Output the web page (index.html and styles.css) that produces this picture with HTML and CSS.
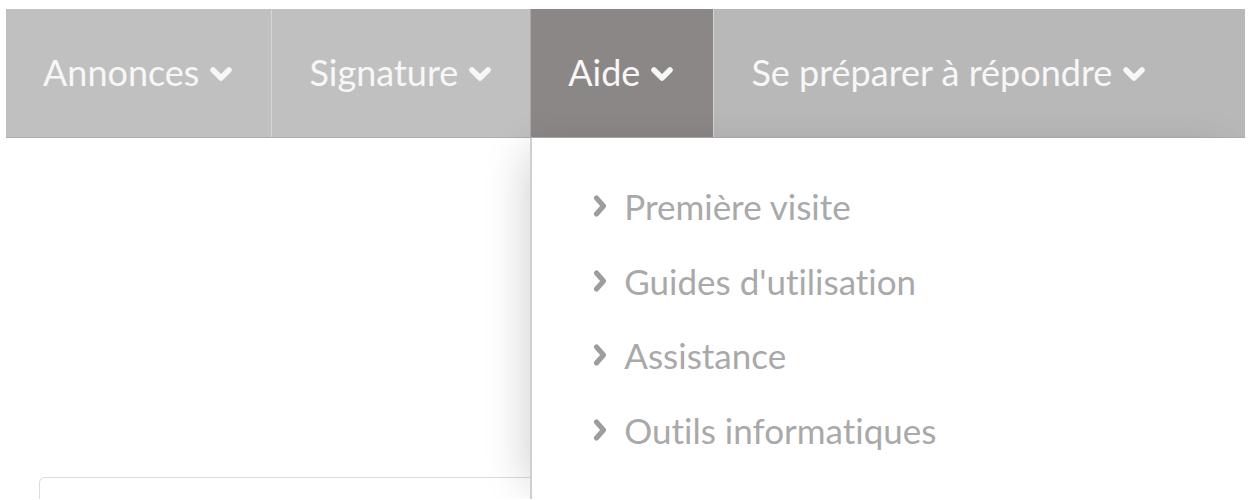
FILE: index.html
```html
<!DOCTYPE html>
<html lang="fr">
<head>
<meta charset="utf-8">
<title>Aide</title>
<link rel="stylesheet" href="styles.css">
</head>
<body>
<div class="page">
  <nav class="menubar">
    <div class="menu-item">
      <span>Annonces</span>
      <svg class="caret" viewBox="0 0 24 16" width="24" height="16"><polyline points="4,4 12,12 20,4"/></svg>
    </div>
    <div class="menu-item">
      <span>Signature</span>
      <svg class="caret" viewBox="0 0 24 16" width="24" height="16"><polyline points="4,4 12,12 20,4"/></svg>
    </div>
    <div class="menu-item active">
      <span>Aide</span>
      <svg class="caret" viewBox="0 0 24 16" width="24" height="16"><polyline points="4,4 12,12 20,4"/></svg>
      <ul class="dropdown">
        <li><svg class="arrow" viewBox="0 0 14 24" width="14" height="24"><polyline points="3.5,4 10.5,12 3.5,20"/></svg>Première visite</li>
        <li><svg class="arrow" viewBox="0 0 14 24" width="14" height="24"><polyline points="3.5,4 10.5,12 3.5,20"/></svg>Guides d'utilisation</li>
        <li><svg class="arrow" viewBox="0 0 14 24" width="14" height="24"><polyline points="3.5,4 10.5,12 3.5,20"/></svg>Assistance</li>
        <li><svg class="arrow" viewBox="0 0 14 24" width="14" height="24"><polyline points="3.5,4 10.5,12 3.5,20"/></svg>Outils informatiques</li>
      </ul>
    </div>
    <div class="menu-item">
      <span>Se préparer à répondre</span>
      <svg class="caret" viewBox="0 0 24 16" width="24" height="16"><polyline points="4,4 12,12 20,4"/></svg>
    </div>
  </nav>
  <main class="content">
    <section class="panel"></section>
  </main>
</div>
</body>
</html>
```
FILE: styles.css
```css
html, body {
  margin: 0;
  background: #fff;
  overflow: hidden;
}

.page {
  padding: 9px 10px 0 6px;
  font-family: Lato, "Liberation Sans", sans-serif;
  font-variant-ligatures: none;
}

.menubar {
  display: flex;
  height: 128px;
  background: #c1c0c0;
  border-bottom: 1px solid #adadad;
}

.menu-item {
  position: relative;
  display: flex;
  align-items: center;
  gap: 10px;
  padding: 0 38px 2px 37px;
  color: #f7f7f7;
  font-size: 36px;
}

.menu-item + .menu-item {
  border-left: 1px solid #d4d4d4;
}

.menu-item:last-child {
  flex: 1;
  background: #b9b8b8;
}

.menu-item.active {
  padding-right: 39px;
  background: #8b8787;
  border-left-color: #a9a7a7;
}

.caret {
  margin-top: 4px;
  fill: none;
  stroke: #f7f7f7;
  stroke-width: 5.5;
  stroke-linecap: round;
  stroke-linejoin: round;
}

/* open submenu of the active item */
.dropdown {
  position: absolute;
  z-index: 2;
  top: calc(100% + 1px);
  left: -1px;
  box-sizing: border-box;
  width: 726px;
  height: 361px;
  margin: 0;
  padding: 31px 0 0 61px;
  list-style: none;
  background: #fff;
  border-left: 2px solid #cfcfcf;
  box-shadow: -18px 0 40px -14px rgba(0, 0, 0, 0.18);
}

.dropdown li {
  display: flex;
  align-items: center;
  gap: 17px;
  height: 74.5px;
  color: #a9a9a9;
  font-size: 35px;
}

.arrow {
  fill: none;
  stroke: #9d9d9d;
  stroke-width: 5;
  stroke-linecap: round;
  stroke-linejoin: round;
}

.content {
  padding: 339px 0 0 33px;
}

.panel {
  width: 700px;
  height: 21px;
  border: 1px solid #dcdcdc;
  border-bottom: none;
  border-radius: 6px 6px 0 0;
}
```
